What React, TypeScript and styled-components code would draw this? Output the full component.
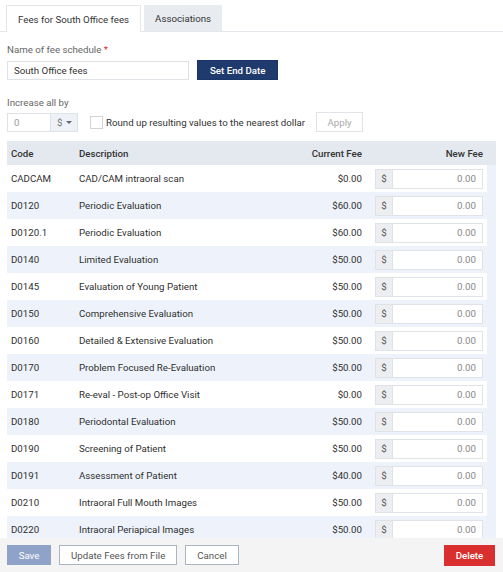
import React from 'react';
import styled, { createGlobalStyle } from 'styled-components';

const GlobalStyle = createGlobalStyle`
  html, body {
    margin: 0;
    padding: 0;
    background: #fff;
  }
  body {
    font-family: Roboto, "Liberation Sans", sans-serif;
    font-size: 9.7px;
    color: #2f2f2f;
  }
  * { box-sizing: border-box; }
`;

type Fee = { code: string; description: string; current: string };

const fees: Fee[] = [
  { code: 'CADCAM', description: 'CAD/CAM intraoral scan', current: '$0.00' },
  { code: 'D0120', description: 'Periodic Evaluation', current: '$60.00' },
  { code: 'D0120.1', description: 'Periodic Evaluation', current: '$60.00' },
  { code: 'D0140', description: 'Limited Evaluation', current: '$50.00' },
  { code: 'D0145', description: 'Evaluation of Young Patient', current: '$50.00' },
  { code: 'D0150', description: 'Comprehensive Evaluation', current: '$50.00' },
  { code: 'D0160', description: 'Detailed & Extensive Evaluation', current: '$50.00' },
  { code: 'D0170', description: 'Problem Focused Re-Evaluation', current: '$50.00' },
  { code: 'D0171', description: 'Re-eval - Post-op Office Visit', current: '$0.00' },
  { code: 'D0180', description: 'Periodontal Evaluation', current: '$50.00' },
  { code: 'D0190', description: 'Screening of Patient', current: '$50.00' },
  { code: 'D0191', description: 'Assessment of Patient', current: '$40.00' },
  { code: 'D0210', description: 'Intraoral Full Mouth Images', current: '$50.00' },
  { code: 'D0220', description: 'Intraoral Periapical Images', current: '$50.00' },
];

const Page = styled.div`
  width: 503px;
  height: 572px;
  display: flex;
  flex-direction: column;
  overflow: hidden;
`;

const TabBar = styled.div`
  display: flex;
  gap: 3px;
  padding: 5px 0 0 6px;
  border-bottom: 1px solid #e3e6ea;
`;

const Tab = styled.div<{ $active?: boolean }>`
  padding: 0 ${p => (p.$active ? 11 : 10)}px;
  display: flex;
  align-items: center;
  font-size: 9.7px;
  color: #333;
  border: 1px solid ${p => (p.$active ? '#e3e6ea' : '#e8ebf0')};
  border-bottom: none;
  background: ${p => (p.$active ? '#fff' : '#e8ebf0')};
  margin-bottom: ${p => (p.$active ? '-1px' : '0')};
  height: ${p => (p.$active ? '27px' : '26px')};
`;

const Body = styled.div`
  padding: 0 7px;
  display: flex;
  flex-direction: column;
  flex: 1;
  min-height: 0;
`;

const Label = styled.div<{ $top: number }>`
  font-size: 9.7px;
  color: #666;
  margin-top: ${p => p.$top}px;
  height: 12px;
  line-height: 12px;
  span { color: #d9302f; }
`;

const Row = styled.div<{ $top: number }>`
  display: flex;
  align-items: center;
  margin-top: ${p => p.$top}px;
`;

const TextInput = styled.div<{ $w: number; $muted?: boolean }>`
  width: ${p => p.$w}px;
  height: 19px;
  border: 1px solid #dfe3e8;
  background: #fff;
  padding: 0 6px;
  display: flex;
  align-items: center;
  font-size: 9.7px;
  color: ${p => (p.$muted ? '#999' : '#333')};
`;

const NavyButton = styled.button`
  height: 20px;
  margin-left: 8px;
  padding: 0 12px;
  border: 1px solid #1a3566;
  background: #1f3b6e;
  color: #fff;
  font-family: inherit;
  font-size: 9.7px;
  font-weight: 500;
`;

const Select = styled.div`
  width: 27px;
  height: 19px;
  border: 1px solid #dfe3e8;
  border-left: none;
  background: #eef2f8;
  display: flex;
  align-items: center;
  justify-content: space-between;
  padding: 0 5px 0 6px;
  color: #777;
  font-size: 9.7px;
  &::after {
    content: '';
    border-left: 3px solid transparent;
    border-right: 3px solid transparent;
    border-top: 3px solid #666;
  }
`;

const Check = styled.div`
  width: 13px;
  height: 13px;
  border: 1px solid #cfd4da;
  background: #fff;
  margin-left: 12px;
`;

const CheckText = styled.span`
  font-size: 9.7px;
  color: #333;
  margin-left: 3px;
`;

const GhostButton = styled.button<{ $disabled?: boolean }>`
  height: 20px;
  padding: 0 11px;
  border: 1px solid ${p => (p.$disabled ? '#e0e4e8' : '#aab4c2')};
  background: #fff;
  color: ${p => (p.$disabled ? '#aaa' : '#555')};
  font-family: inherit;
  font-size: 9.7px;
`;

const ApplyButton = styled(GhostButton)`
  margin-left: 11px;
  width: 47px;
  padding: 0;
`;

const TableWrap = styled.div`
  margin-top: 9px;
  flex: 1;
  min-height: 0;
  overflow: hidden;
  width: 489px;
  display: flex;
  flex-direction: column;
`;

const columns = '68px 1fr 100px 121px';

const HeadRow = styled.div`
  display: grid;
  grid-template-columns: ${columns};
  height: 24px;
  align-items: center;
  background: #e4e8ef;
  font-size: 9.7px;
  font-weight: 500;
  color: #333;
  padding: 0 13px 0 4px;
  flex-shrink: 0;
`;

const Scroll = styled.div`
  flex: 1;
  min-height: 0;
  overflow: hidden;
  border-right: 9px solid #edf2fa;
`;

const FeeRow = styled.div<{ $alt: boolean }>`
  display: grid;
  grid-template-columns: ${columns};
  height: 27px;
  align-items: center;
  background: ${p => (p.$alt ? '#eef3fb' : '#fff')};
  font-size: 9.7px;
  padding: 0 4px 0 4px;
`;

const Right = styled.div`
  text-align: right;
`;

const FeeInput = styled.div`
  display: flex;
  justify-self: end;
  width: 108px;
  height: 20px;
  border: 1px solid #dfe3e8;
  background: #fff;
`;

const Addon = styled.div`
  width: 17px;
  background: #eceef1;
  border-right: 1px solid #dfe3e8;
  display: flex;
  align-items: center;
  justify-content: center;
  color: #555;
  font-size: 9.7px;
`;

const FeeValue = styled.div`
  flex: 1;
  display: flex;
  align-items: center;
  justify-content: flex-end;
  padding-right: 6px;
  color: #888;
  font-size: 9.7px;
`;

const Footer = styled.div`
  height: 34px;
  flex-shrink: 0;
  background: #f4f4f4;
  display: flex;
  align-items: center;
  gap: 8px;
  padding: 0 8px 0 7px;
`;

const SaveButton = styled.button`
  height: 20px;
  width: 44px;
  border: none;
  background: #8fa2c7;
  color: #fff;
  font-family: inherit;
  font-size: 9.7px;
`;

const DeleteButton = styled.button`
  margin-left: auto;
  height: 21px;
  width: 51px;
  border: none;
  background: #d9302f;
  color: #fff;
  font-family: inherit;
  font-size: 9.7px;
  font-weight: 500;
`;

export default function App() {
  return (
    <Page>
      <GlobalStyle />
      <TabBar>
        <Tab $active>Fees for South Office fees</Tab>
        <Tab>Associations</Tab>
      </TabBar>
      <Body>
        <Label $top={12}>
          Name of fee schedule <span>*</span>
        </Label>
        <Row $top={4}>
          <TextInput $w={182}>South Office fees</TextInput>
          <NavyButton>Set End Date</NavyButton>
        </Row>
        <Label $top={17}>Increase all by</Label>
        <Row $top={3}>
          <TextInput $w={44} $muted>0</TextInput>
          <Select>$</Select>
          <Check />
          <CheckText>Round up resulting values to the nearest dollar</CheckText>
          <ApplyButton $disabled>Apply</ApplyButton>
        </Row>
        <TableWrap>
          <HeadRow>
            <div>Code</div>
            <div>Description</div>
            <Right>Current Fee</Right>
            <Right>New Fee</Right>
          </HeadRow>
          <Scroll>
            {fees.map((f, i) => (
              <FeeRow key={f.code} $alt={i % 2 === 1}>
                <div>{f.code}</div>
                <div>{f.description}</div>
                <Right>{f.current}</Right>
                <FeeInput>
                  <Addon>$</Addon>
                  <FeeValue>0.00</FeeValue>
                </FeeInput>
              </FeeRow>
            ))}
          </Scroll>
        </TableWrap>
      </Body>
      <Footer>
        <SaveButton>Save</SaveButton>
        <GhostButton>Update Fees from File</GhostButton>
        <GhostButton>Cancel</GhostButton>
        <DeleteButton>Delete</DeleteButton>
      </Footer>
    </Page>
  );
}
